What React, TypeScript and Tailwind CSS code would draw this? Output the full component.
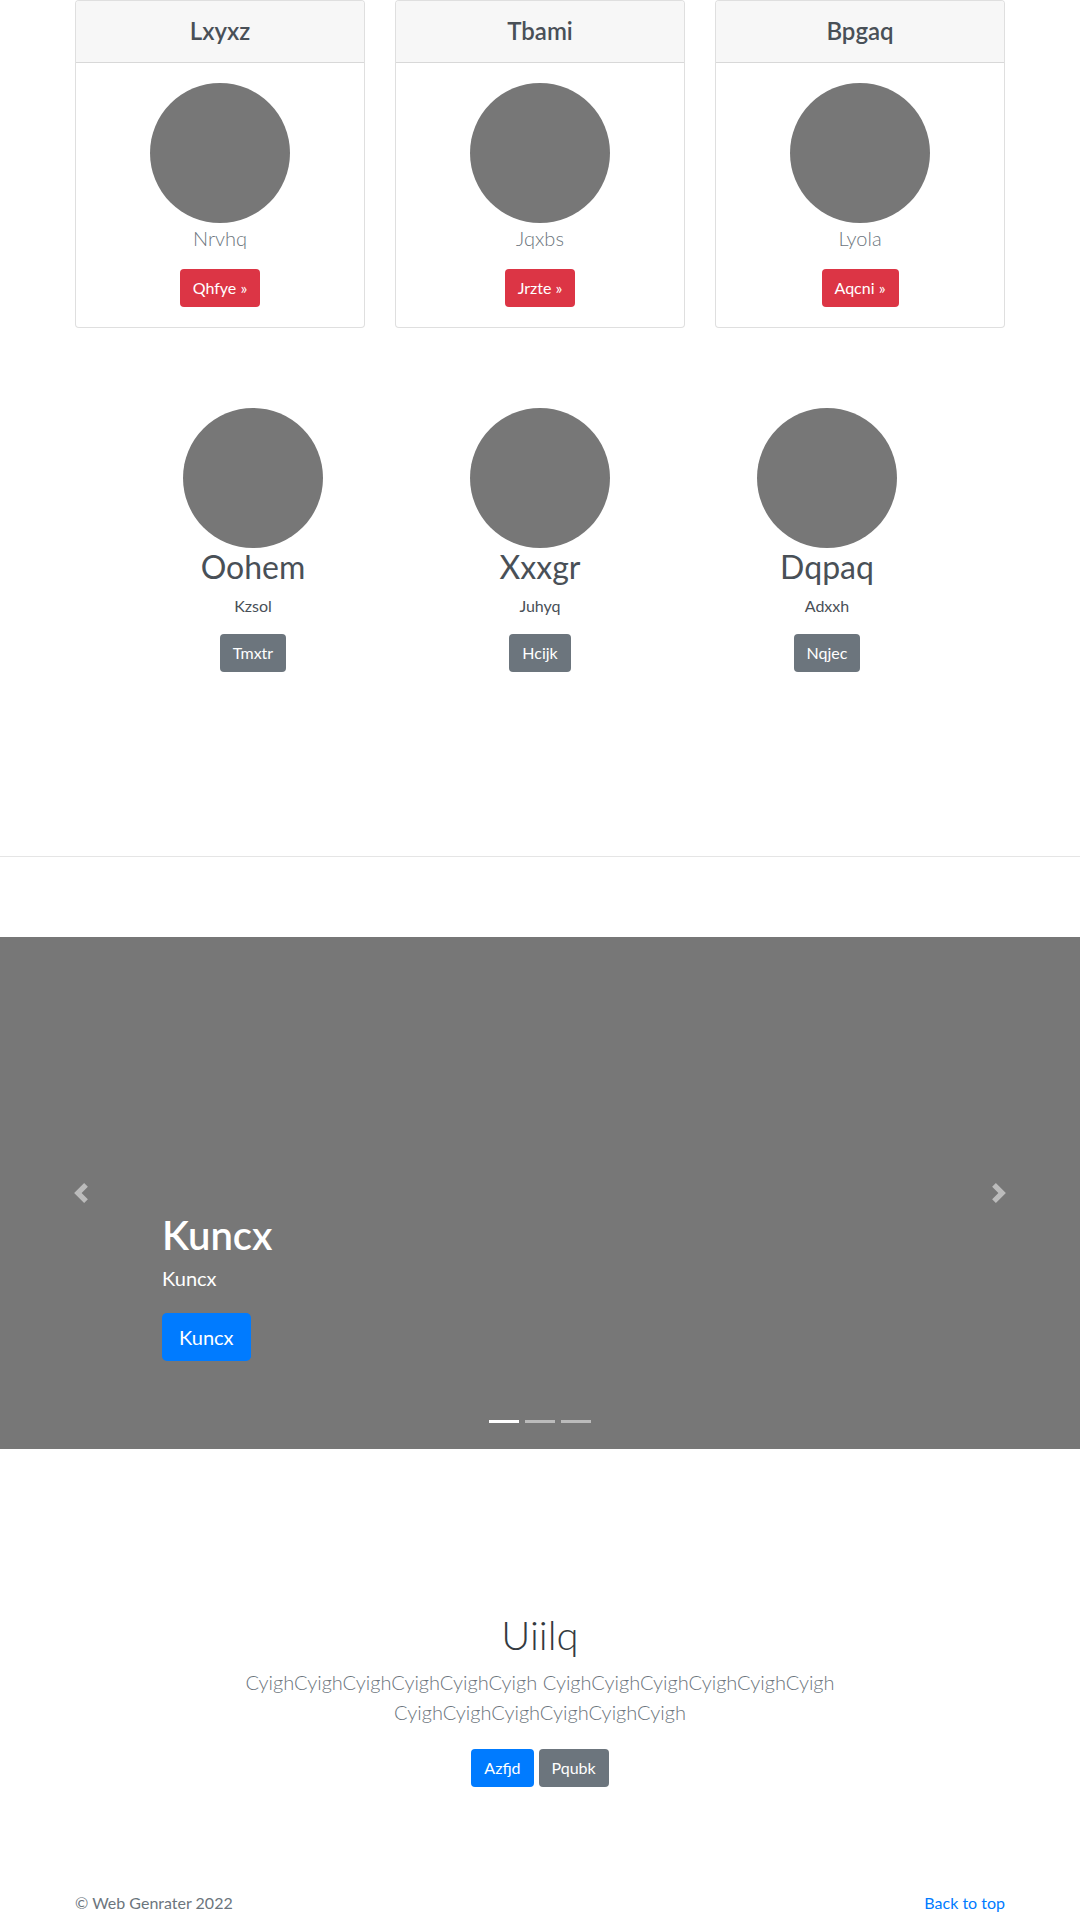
import React from 'react'

const cards = [
  { title: 'Lxyxz', text: 'Nrvhq', btn: 'Qhfye' },
  { title: 'Tbami', text: 'Jqxbs', btn: 'Jrzte' },
  { title: 'Bpgaq', text: 'Lyola', btn: 'Aqcni' },
]

const people = [
  { name: 'Oohem', text: 'Kzsol', btn: 'Tmxtr' },
  { name: 'Xxxgr', text: 'Juhyq', btn: 'Hcijk' },
  { name: 'Dqpaq', text: 'Adxxh', btn: 'Nqjec' },
]

const word = 'CyighCyighCyighCyighCyighCyigh'

function PricingCard({ title, text, btn }: { title: string; text: string; btn: string }) {
  return (
    <div className="border border-black/[.125] rounded-[4px] bg-white">
      <div className="bg-[#f7f7f7] border-b border-black/[.125] rounded-t-[3px] px-5 py-4">
        <h4 className="text-center text-[24px] leading-[1.2] font-semibold text-[#495057]">{title}</h4>
      </div>
      <div className="p-5 flex flex-col items-center">
        <div className="w-[140px] h-[140px] rounded-full bg-[#777]" />
        <p className="text-[20px] leading-[30px] font-light text-[#6c757d] mb-4">{text}</p>
        <button className="bg-[#dc3545] text-white text-base leading-6 px-3 py-1.5 rounded-[4px] border border-transparent">
          {btn} »
        </button>
      </div>
    </div>
  )
}

function Marketing({ name, text, btn }: { name: string; text: string; btn: string }) {
  return (
    <div className="flex flex-col items-center text-center">
      <div className="w-[140px] h-[140px] rounded-full bg-[#777]" />
      <h2 className="text-[32px] leading-[1.2] font-normal text-[#495057] mb-2">{name}</h2>
      <p className="text-base leading-6 text-[#495057] mb-4">{text}</p>
      <button className="bg-[#6c757d] text-white text-base leading-6 px-3 py-1.5 rounded-[4px] border border-transparent">
        {btn}
      </button>
    </div>
  )
}

function Chevron({ dir }: { dir: 'left' | 'right' }) {
  return (
    <svg width="20" height="20" viewBox="0 0 8 8" fill="#fff" className="opacity-50">
      {dir === 'left' ? (
        <path d="M5.25 0l-4 4 4 4 1.5-1.5L4.25 4l2.5-2.5L5.25 0z" />
      ) : (
        <path d="M2.75 0l-1.5 1.5L3.75 4l-2.5 2.5L2.75 8l4-4-4-4z" />
      )}
    </svg>
  )
}

export default function App() {
  return (
    <div className="w-full bg-white font-['Lato',sans-serif] text-[#212529]">
      <div className="w-[960px] mx-auto px-[15px]">
        <div className="grid grid-cols-3 gap-[30px]">
          {cards.map((c) => (
            <PricingCard key={c.title} {...c} />
          ))}
        </div>
      </div>

      <div className="w-[861px] mx-auto grid grid-cols-3 mt-[80px]">
        {people.map((p) => (
          <Marketing key={p.name} {...p} />
        ))}
      </div>

      <hr className="mt-[184px] border-0 border-t border-black/10" />

      <div className="relative mt-[80px] h-[512px] bg-[#777]">
        <div className="absolute left-0 top-0 bottom-0 w-[15%] flex items-center justify-center">
          <Chevron dir="left" />
        </div>
        <div className="absolute right-0 top-0 bottom-0 w-[15%] flex items-center justify-center">
          <Chevron dir="right" />
        </div>
        <div className="absolute left-[15%] right-[15%] bottom-[88px] text-white">
          <h1 className="text-[40px] leading-[1.2] font-semibold mb-[4px]">Kuncx</h1>
          <p className="text-[20px] leading-[30px] mb-5">Kuncx</p>
          <button className="bg-[#007bff] text-white text-[20px] leading-[30px] px-4 py-2 rounded-[4.8px] border border-transparent">
            Kuncx
          </button>
        </div>
        <div className="absolute left-0 right-0 bottom-[26px] flex justify-center gap-[6px]">
          <span className="w-[30px] h-[3px] bg-white" />
          <span className="w-[30px] h-[3px] bg-white opacity-50" />
          <span className="w-[30px] h-[3px] bg-white opacity-50" />
        </div>
      </div>

      <section className="pt-[162px] text-center">
        <h1 className="text-[40px] leading-[48px] font-light text-[#343a40] mb-2">Uiilq</h1>
        <p className="w-[610px] mx-auto text-[20px] leading-[30px] font-light text-[#6c757d] mb-4">
          {word} {word} {word}
        </p>
        <div className="flex justify-center gap-[5px] mt-[22px]">
          <button className="bg-[#007bff] text-white text-base leading-6 px-3 py-1.5 rounded-[4px] border border-transparent">
            Azfjd
          </button>
          <button className="bg-[#6c757d] text-white text-base leading-6 px-3 py-1.5 rounded-[4px] border border-transparent">
            Pqubk
          </button>
        </div>
      </section>

      <footer className="w-[960px] mx-auto px-[15px] mt-[104px] flex justify-between text-base leading-6 text-[#6c757d]">
        <p>© Web Genrater 2022</p>
        <a href="#" className="text-[#007bff]">Back to top</a>
      </footer>
    </div>
  )
}
